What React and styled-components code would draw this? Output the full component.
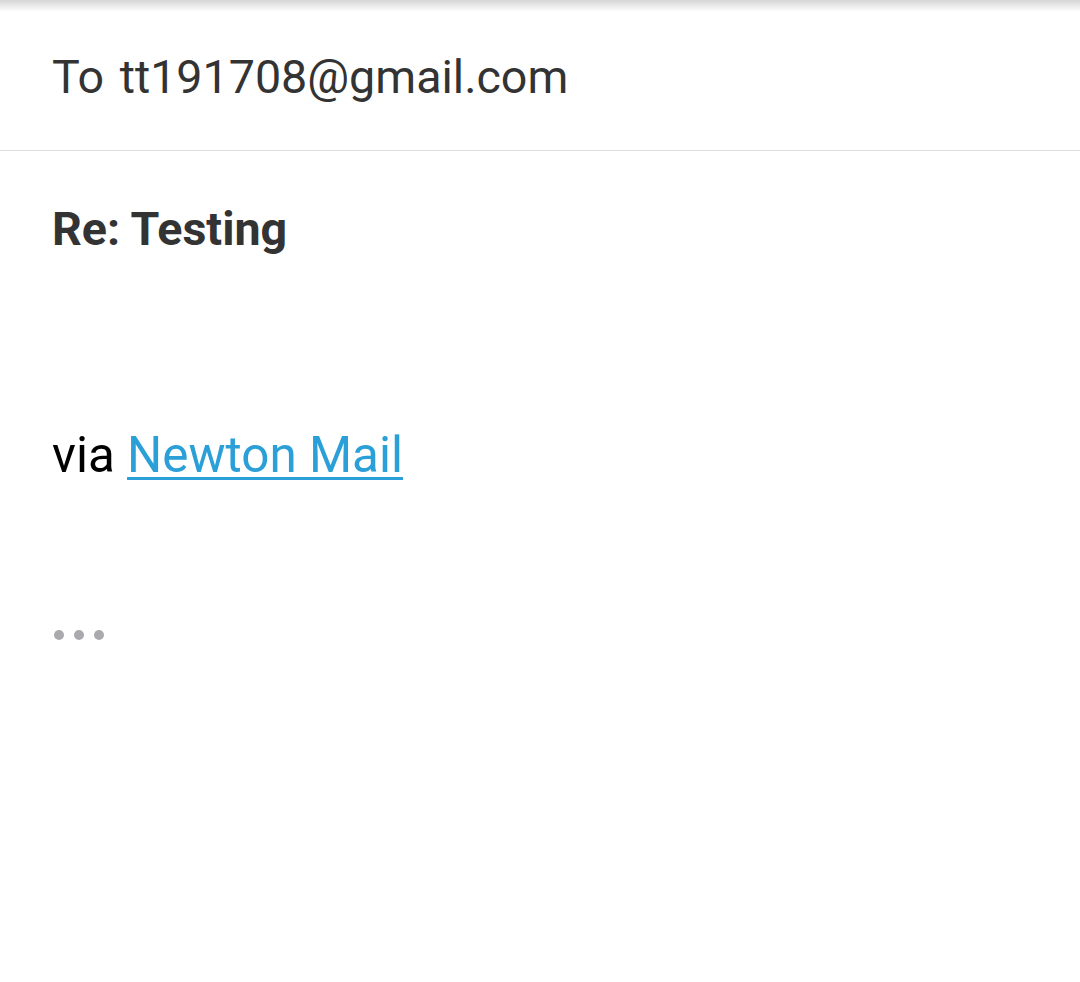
import React from "react";
import styled, { createGlobalStyle } from "styled-components";

const Global = createGlobalStyle`
  html, body { margin: 0; padding: 0; background: #ffffff; }
  body { font-family: Roboto, "Noto Sans", sans-serif; }
`;

const Page = styled.div`
  width: 1080px;
  height: 982px;
  background: #fff;
  display: flex;
  flex-direction: column;
  position: relative;
  overflow: hidden;
`;

const TopShadow = styled.div`
  position: absolute;
  top: 0;
  left: 0;
  right: 0;
  height: 12px;
  background: linear-gradient(to bottom, rgba(0,0,0,0.16), rgba(0,0,0,0));
`;

const Header = styled.div`
  height: 151px;
  box-sizing: border-box;
  border-bottom: 1px solid #dedede;
  display: flex;
  align-items: center;
  padding: 0 52px;
  padding-top: 3px;
`;

const Recipient = styled.span`
  font-size: 46.6px;
  word-spacing: 4px;
  color: #333333;
  font-weight: 400;
`;

const Body = styled.div`
  padding: 0 52px;
  display: flex;
  flex-direction: column;
`;

const Subject = styled.h1`
  margin: 0;
  margin-top: 50px;
  font-size: 46.6px;
  font-weight: 700;
  color: #333333;
  line-height: 56px;
`;

const Signature = styled.p`
  margin: 0;
  margin-top: 170px;
  font-size: 49.4px;
  color: #000;
  line-height: 56px;
`;

const Link = styled.a`
  color: #2b9fd7;
  text-decoration: underline;
  text-decoration-thickness: 3px;
  text-underline-offset: 5px;
`;

const Dots = styled.div`
  display: flex;
  gap: 10px;
  margin-top: 147px;
  margin-left: 2px;
`;

const Dot = styled.span`
  width: 10px;
  height: 10px;
  border-radius: 50%;
  background: #a9a9ae;
`;

export default function App() {
  return (
    <Page>
      <Global />
      <TopShadow />
      <Header>
        <Recipient>To tt191708@gmail.com</Recipient>
      </Header>
      <Body>
        <Subject>Re: Testing</Subject>
        <Signature>
          via <Link href="#">Newton Mail</Link>
        </Signature>
        <Dots>
          <Dot />
          <Dot />
          <Dot />
        </Dots>
      </Body>
    </Page>
  );
}
